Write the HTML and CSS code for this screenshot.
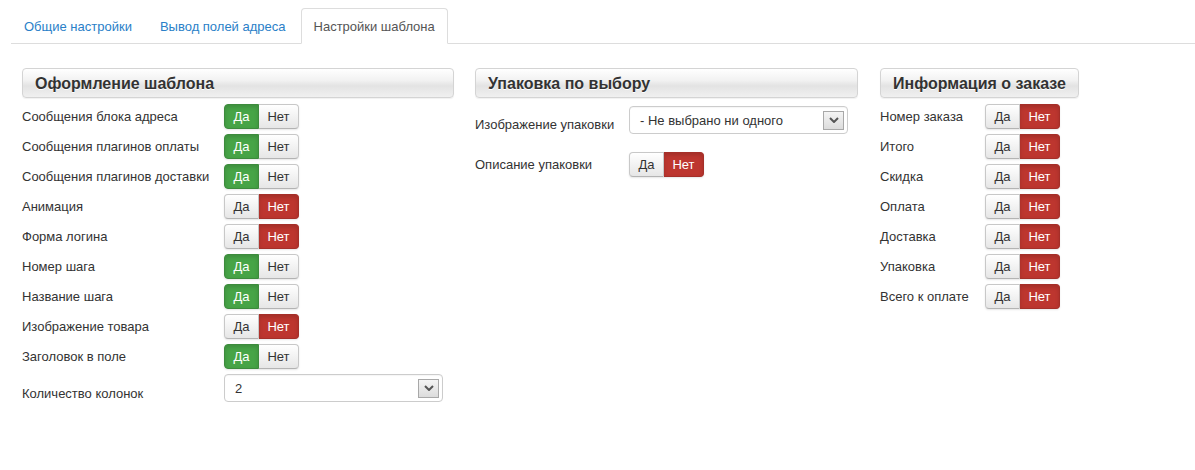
FILE: index.html
```html
<!DOCTYPE html>
<html lang="ru">
<head>
  <meta charset="UTF-8" />
  <title>Настройки шаблона</title>
  <link rel="stylesheet" href="styles.css">
</head>
<body>

<!-- Tabs -->
<ul class="tabs">
  <li><a href="#">Общие настройки</a></li>
  <li><a href="#">Вывод полей адреса</a></li>
  <li class="active"><a href="#">Настройки шаблона</a></li>
</ul>

<div class="columns">

  <!-- Template design -->
  <div class="col col-design">
    <h3 class="box-title">Оформление шаблона</h3>
    <div class="row"><span class="label">Сообщения блока адреса</span><div class="toggle yes"><span class="da">Да</span><span class="net">Нет</span></div></div>
    <div class="row"><span class="label">Сообщения плагинов оплаты</span><div class="toggle yes"><span class="da">Да</span><span class="net">Нет</span></div></div>
    <div class="row"><span class="label">Сообщения плагинов доставки</span><div class="toggle yes"><span class="da">Да</span><span class="net">Нет</span></div></div>
    <div class="row"><span class="label">Анимация</span><div class="toggle no"><span class="da">Да</span><span class="net">Нет</span></div></div>
    <div class="row"><span class="label">Форма логина</span><div class="toggle no"><span class="da">Да</span><span class="net">Нет</span></div></div>
    <div class="row"><span class="label">Номер шага</span><div class="toggle yes"><span class="da">Да</span><span class="net">Нет</span></div></div>
    <div class="row"><span class="label">Название шага</span><div class="toggle yes"><span class="da">Да</span><span class="net">Нет</span></div></div>
    <div class="row"><span class="label">Изображение товара</span><div class="toggle no"><span class="da">Да</span><span class="net">Нет</span></div></div>
    <div class="row"><span class="label">Заголовок в поле</span><div class="toggle yes"><span class="da">Да</span><span class="net">Нет</span></div></div>
    <div class="row row-select">
      <span class="label">Количество колонок</span>
      <div class="select">
        <span>2</span>
        <span class="select-arrow"><svg width="10" height="6" viewBox="0 0 10 6"><path d="M1 1 L5 5 L9 1" fill="none" stroke="#555" stroke-width="2"/></svg></span>
      </div>
    </div>
  </div>

  <!-- Packaging -->
  <div class="col col-pack">
    <h3 class="box-title">Упаковка по выбору</h3>
    <div class="row row-select">
      <span class="label">Изображение упаковки</span>
      <div class="select">
        <span>- Не выбрано ни одного</span>
        <span class="select-arrow"><svg width="10" height="6" viewBox="0 0 10 6"><path d="M1 1 L5 5 L9 1" fill="none" stroke="#555" stroke-width="2"/></svg></span>
      </div>
    </div>
    <div class="row row-gap"><span class="label">Описание упаковки</span><div class="toggle no"><span class="da">Да</span><span class="net">Нет</span></div></div>
  </div>

  <!-- Order info -->
  <div class="col col-order">
    <h3 class="box-title">Информация о заказе</h3>
    <div class="row"><span class="label">Номер заказа</span><div class="toggle no"><span class="da">Да</span><span class="net">Нет</span></div></div>
    <div class="row"><span class="label">Итого</span><div class="toggle no"><span class="da">Да</span><span class="net">Нет</span></div></div>
    <div class="row"><span class="label">Скидка</span><div class="toggle no"><span class="da">Да</span><span class="net">Нет</span></div></div>
    <div class="row"><span class="label">Оплата</span><div class="toggle no"><span class="da">Да</span><span class="net">Нет</span></div></div>
    <div class="row"><span class="label">Доставка</span><div class="toggle no"><span class="da">Да</span><span class="net">Нет</span></div></div>
    <div class="row"><span class="label">Упаковка</span><div class="toggle no"><span class="da">Да</span><span class="net">Нет</span></div></div>
    <div class="row"><span class="label">Всего к оплате</span><div class="toggle no"><span class="da">Да</span><span class="net">Нет</span></div></div>
  </div>

</div>

</body>
</html>
```

FILE: styles.css
```css
body {
  font-family: "Liberation Sans", Arial, sans-serif;
  font-size: 13px;
  color: #333;
  margin: 0;
  padding: 0;
  background: #fff;
}
.tabs {
  list-style: none;
  margin: 8px 0 0 11px;
  padding: 0;
  display: flex;
  border-bottom: 1px solid #ddd;
  height: 35px;
}
.tabs li {
  margin-bottom: -1px;
}
.tabs a {
  display: block;
  height: 34px;
  line-height: 36px;
  padding: 0 12px;
  margin-right: 2px;
  color: #2a80c8;
  text-decoration: none;
  border: 1px solid transparent;
  border-radius: 4px 4px 0 0;
}
.tabs .active a {
  color: #555;
  background: #fff;
  border-color: #ddd #ddd transparent;
}
.columns {
  display: flex;
  gap: 21px;
  padding: 24px 0 0 22px;
}
.col-design {
  width: 432px;
}
.col-pack {
  width: 383px;
}
.box-title {
  margin: 0 0 6px;
  height: 28px;
  line-height: 30px;
  padding: 0 12px;
  font-size: 16px;
  font-weight: bold;
  color: #333;
  text-shadow: 0 1px 0 #fff;
  border: 1px solid #d4d4d4;
  border-radius: 4px;
  background: linear-gradient(#ffffff, #f2f2f2 40%, #e3e3e3 60%, #f0f0f0);
  box-shadow: 0 1px 1px rgba(0,0,0,0.06);
}
.col-order .box-title {
  display: inline-block;
  margin-left: 1px;
}
.row {
  display: flex;
  align-items: center;
  height: 25px;
  margin-bottom: 5px;
}
.label {
  flex: 0 0 auto;
}
.col-design .label {
  width: 202px;
}
.col-pack .label {
  width: 154px;
}
.col-order .row {
  padding-left: 1px;
}
.col-order .label {
  width: 105px;
}
.toggle {
  display: flex;
  height: 25px;
  border-radius: 4px;
  box-shadow: 0 1px 2px rgba(0,0,0,0.1);
}
.toggle span {
  display: flex;
  align-items: center;
  justify-content: center;
  height: 23px;
  border: 1px solid #c8c8c8;
  border-bottom-color: #b3b3b3;
  background: linear-gradient(#ffffff, #e6e6e6);
  color: #333;
}
.toggle .da {
  width: 33px;
  border-radius: 4px 0 0 4px;
}
.toggle .net {
  width: 39px;
  border-left: none;
  border-radius: 0 4px 4px 0;
}
.toggle.yes .da {
  background: #47a447;
  border-color: #3d8b3d;
  color: #fff;
  box-shadow: inset 0 2px 4px rgba(0,0,0,0.15);
}
.toggle.no .net {
  background: #bd362f;
  border-color: #a52f29;
  color: #fff;
  box-shadow: inset 0 2px 4px rgba(0,0,0,0.15);
}
.row-select {
  height: 28px;
}
.col-design .row-select {
  margin-top: 2px;
}
.col-design .row-select .label {
  padding-top: 10px;
}
.col-pack .row-select {
  margin-top: 8px;
  margin-bottom: 0;
}
.col-pack .row-select .label {
  padding-top: 8px;
}
.select {
  display: flex;
  align-items: center;
  justify-content: space-between;
  box-sizing: border-box;
  height: 28px;
  width: 219px;
  padding: 0 3px 0 10px;
  border: 1px solid #ccc;
  border-radius: 4px;
  background: #fff;
  box-shadow: inset 0 1px 1px rgba(0,0,0,0.04);
}
.select-arrow {
  display: flex;
  align-items: center;
  justify-content: center;
  width: 19px;
  height: 17px;
  border: 1px solid #a8a8a8;
  background: linear-gradient(#f4f4f4, #dcdcdc);
}
.row-gap {
  margin-top: 18px;
}
```
